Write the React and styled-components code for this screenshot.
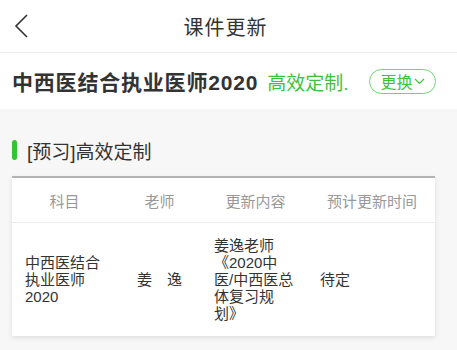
import React from 'react';
import styled, { createGlobalStyle } from 'styled-components';

const GlobalStyle = createGlobalStyle`
  body {
    margin: 0;
    background: #f7f7f7;
    font-family: "Liberation Sans", "Noto Sans CJK SC", sans-serif;
    color: #333;
  }
`;

const Page = styled.div`
  width: 457px;
  min-height: 350px;
  background: #f7f7f7;
`;

const NavBar = styled.div`
  height: 52px;
  background: white;
  border-bottom: 1px solid #ececec;
  display: grid;
  grid-template-columns: 60px 1fr 60px;
  align-items: center;
`;

const BackButton = styled.div`
  padding-left: 14px;
  display: flex;
  align-items: center;
  height: 24px;
`;

const NavTitle = styled.div`
  text-align: center;
  font-size: 20px;
  color: #333;
  letter-spacing: 1px;
  padding-right: 6px;
`;

const CourseBar = styled.div`
  height: 56px;
  background: white;
  display: flex;
  align-items: center;
  padding: 0 21px 0 12px;
`;

const CourseName = styled.div`
  font-size: 21px;
  font-weight: bold;
  color: #333;
  letter-spacing: 0.8px;
`;

const CourseTag = styled.div`
  font-size: 19px;
  color: #3dc23d;
  margin-left: 9px;
`;

const SwitchButton = styled.div`
  margin-left: auto;
  width: 67px;
  height: 25px;
  box-sizing: border-box;
  border: 1px solid #74d474;
  border-radius: 13px;
  display: flex;
  align-items: center;
  justify-content: center;
  gap: 1px;
  font-size: 16px;
  color: #3dc23d;
`;

const Section = styled.div`
  padding: 31px 22px 0 12px;
`;

const SectionTitle = styled.div`
  display: flex;
  align-items: center;
  height: 20px;
  font-size: 19px;
  color: #333;
  margin-bottom: 16px;
`;

const GreenMark = styled.span`
  width: 5px;
  height: 20px;
  border-radius: 3px;
  background: #34c534;
  margin-right: 10px;
`;

const Card = styled.div`
  background: white;
  border-top: 2px solid #b3b3b3;
  box-shadow: 0 2px 5px rgba(0, 0, 0, 0.1);
`;

const Row = styled.div`
  display: grid;
  grid-template-columns: 105px 85px 107px 126px;
  align-items: center;
  ${(p) => (p.$head
    ? 'height: 44px; border-bottom: 1px solid #ededed;'
    : 'padding: 14px 0;')}
`;

const HeadCell = styled.div`
  text-align: center;
  font-size: 15px;
  color: #999;
`;

const Cell = styled.div`
  font-size: 15px;
  line-height: 17px;
  color: #333;
  text-align: ${(p) => p.$align || 'left'};
  padding-left: ${(p) => p.$pad ?? 13}px;
  padding-right: ${(p) => p.$padRight ?? 12}px;
`;

const BackIcon = () => (
  <svg width="14" height="24" viewBox="0 0 14 24">
    <polyline points="13,1 2,12 13,23" fill="none" stroke="#333" strokeWidth="1.6" />
  </svg>
);

const DownIcon = () => (
  <svg width="11" height="7" viewBox="0 0 11 7">
    <polyline points="1,1 5.5,5.5 10,1" fill="none" stroke="#3dc23d" strokeWidth="1.2" />
  </svg>
);

const columns = ['科目', '老师', '更新内容', '预计更新时间'];

const App = () => (
  <Page>
    <GlobalStyle />
    <NavBar>
      <BackButton><BackIcon /></BackButton>
      <NavTitle>课件更新</NavTitle>
      <div />
    </NavBar>
    <CourseBar>
      <CourseName>中西医结合执业医师2020</CourseName>
      <CourseTag>高效定制.</CourseTag>
      <SwitchButton>
        更换
        <DownIcon />
      </SwitchButton>
    </CourseBar>
    <Section>
      <SectionTitle>
        <GreenMark />
        [预习]高效定制
      </SectionTitle>
      <Card>
        <Row $head>
          {columns.map((c) => <HeadCell key={c}>{c}</HeadCell>)}
        </Row>
        <Row>
          <Cell>中西医结合执业医师2020</Cell>
          <Cell $align="center" $pad={0} $padRight={0}>姜　逸</Cell>
          <Cell $pad={12} $padRight={14}>姜逸老师《2020中医/中西医总体复习规划》</Cell>
          <Cell $pad={11}>待定</Cell>
        </Row>
      </Card>
    </Section>
  </Page>
);

export default App;
